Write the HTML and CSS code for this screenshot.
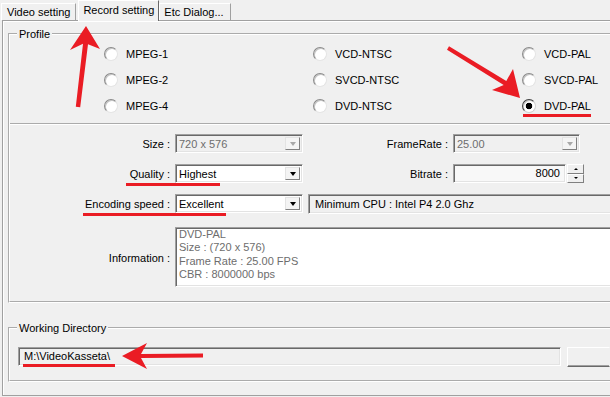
FILE: index.html
```html
<!DOCTYPE html>
<html lang="en">
<head>
    <meta charset="UTF-8">
    <meta name="viewport" content="width=device-width, initial-scale=1.0">
    <title>Record setting</title>
    <link rel="stylesheet" href="styles.css">
</head>
<body>
    <div class="window">
        <div class="tabs">
            <div class="tab">Video setting</div>
            <div class="tab active">Record setting</div>
            <div class="tab last">Etc Dialog...</div>
        </div>
        <div class="page">
            <fieldset class="group">
                <legend>Profile</legend>
                <div class="radios">
                    <label class="radio"><span class="dot"></span>MPEG-1</label>
                    <label class="radio"><span class="dot"></span>VCD-NTSC</label>
                    <label class="radio"><span class="dot"></span>VCD-PAL</label>
                    <label class="radio"><span class="dot"></span>MPEG-2</label>
                    <label class="radio"><span class="dot"></span>SVCD-NTSC</label>
                    <label class="radio"><span class="dot"></span>SVCD-PAL</label>
                    <label class="radio"><span class="dot"></span>MPEG-4</label>
                    <label class="radio"><span class="dot"></span>DVD-NTSC</label>
                    <label class="radio"><span class="dot checked"></span>DVD-PAL</label>
                </div>
                <div class="settings">
                    <span class="lbl first">Size :</span>
                    <div class="combo disabled"><span>720 x 576</span><i class="drop"></i></div>
                    <span class="lbl">FrameRate :</span>
                    <div class="combo disabled"><span>25.00</span><i class="drop"></i></div>

                    <span class="lbl first">Quality :</span>
                    <div class="combo"><span>Highest</span><i class="drop"></i></div>
                    <span class="lbl">Bitrate :</span>
                    <div class="spinner">
                        <div class="field number">8000</div>
                        <div class="spin"><span class="up"></span><span class="down"></span></div>
                    </div>

                    <span class="lbl first">Encoding speed :</span>
                    <div class="combo"><span>Excellent</span><i class="drop"></i></div>
                    <div class="field cpu">Minimum CPU : Intel P4 2.0 Ghz</div>

                    <span class="lbl first info-lbl">Information :</span>
                    <div class="field info">DVD-PAL<br>Size : (720 x 576)<br>Frame Rate : 25.00 FPS<br>CBR : 8000000 bps</div>
                </div>
            </fieldset>

            <fieldset class="group workdir">
                <legend>Working Directory</legend>
                <div class="dir-row">
                    <div class="field dir">M:\VideoKasseta\</div>
                    <div class="browse"></div>
                </div>
            </fieldset>
        </div>
    </div>

    <svg class="marks" width="610" height="397" viewBox="0 0 610 397">
        <g fill="#ea1c24">
            <rect x="83" y="17" width="74" height="3"/>
            <rect x="523" y="114" width="68" height="3"/>
            <rect x="126" y="183" width="94" height="3"/>
            <rect x="83" y="213" width="143" height="3"/>
            <rect x="23" y="364" width="92" height="3"/>
            <polygon points="86,26 100,49 88,44.3 80.2,107.3 75.8,106.7 83,43.7 70,50"/>
            <polygon points="520,98 513,69 506.3,80.9 449,46.3 447,49.7 503.7,85.1 492,90"/>
            <polygon points="122,356 147,343 141,354 203,353.5 203,357.5 141,358 147,369"/>
        </g>
    </svg>
</body>
</html>
```

FILE: styles.css
```css
body {
    margin: 0;
    width: 610px;
    height: 397px;
    overflow: hidden;
    position: relative;
    background-color: #f0f0f0;
    font-family: 'Liberation Sans', Arial, sans-serif;
    font-size: 11px;
    color: #000;
}

.window {
    width: 610px;
}

/* tabs */
.tabs {
    display: flex;
    align-items: flex-end;
    height: 20px;
    padding-left: 1px;
}

.tab {
    height: 16px;
    line-height: 16px;
    padding: 0 5px;
    border: 1px solid #fff;
    border-right-color: #a0a0a0;
    border-bottom: none;
    white-space: nowrap;
}

.tab.active {
    height: 20px;
    line-height: 18px;
    padding: 0 4px;
    margin: 0 0 -1px 2px;
    border-right-color: #696969;
    background-color: #f0f0f0;
    position: relative;
    z-index: 1;
}

.tab.last {
    padding: 0 6px 0 4px;
}

.page {
    margin-left: 2px;
    border: 1px solid #a0a0a0;
    border-right: none;
    box-shadow: inset 1px 1px 0 #fff;
    padding: 0 0 13px 0;
}

/* group boxes */
.group {
    margin: 6px 0 0 5px;
    padding: 0;
    border: 2px groove #fff;
    border-right: none;
    min-width: 0;
}

.group legend {
    margin-left: 7px;
    padding: 0 2px;
    line-height: 14px;
}

.group.workdir {
    margin-top: 18px;
}

/* radio buttons */
.radios {
    display: grid;
    grid-template-columns: 209px 209px 1fr;
    grid-auto-rows: 26px;
    padding: 0 0 4px 94px;
}

.radio {
    display: flex;
    align-items: center;
    gap: 8px;
    white-space: nowrap;
}

.dot {
    width: 14px;
    height: 14px;
    box-sizing: border-box;
    border-radius: 50%;
    border: 1px solid;
    border-color: #8a8a8a #e4e4e4 #e4e4e4 #8a8a8a;
    background-color: #fff;
    box-shadow: inset 1px 1px 0 #c4c4c4;
}

.dot.checked {
    border-color: #404040 #d0d0d0 #d0d0d0 #404040;
    background: radial-gradient(circle, #000 0, #000 3px, #fff 3.6px);
}

/* settings grid */
.settings {
    border-top: 2px groove #fff;
    display: grid;
    grid-template-columns: 165px 128px 150px 127px 1fr;
    grid-template-rows: 19px 19px 19px 63px;
    row-gap: 11px;
    align-items: center;
    padding: 9px 0 14px;
}

.lbl {
    text-align: right;
    padding-right: 5px;
    white-space: nowrap;
}

.lbl.first {
    grid-column: 1;
}

.lbl.info-lbl {
    padding-top: 4px;
}

.combo,
.field {
    box-sizing: border-box;
    height: 19px;
    border: 1px solid;
    border-color: #a0a0a0 #fff #fff #a0a0a0;
    box-shadow: inset 1px 1px 0 #696969, inset -1px -1px 0 #e3e3e3;
    background-color: #fff;
    white-space: nowrap;
}

.combo {
    display: flex;
    align-items: center;
    padding-left: 3px;
}

.combo.disabled {
    background-color: #f0f0f0;
    color: #6d6d6d;
}

.drop {
    margin-left: auto;
    margin-right: 2px;
    width: 15px;
    height: 13px;
    box-sizing: border-box;
    display: flex;
    align-items: center;
    justify-content: center;
    border: 1px solid;
    border-color: #e3e3e3 #808080 #808080 #e3e3e3;
    background-color: #f4f4f4;
}

.drop::before {
    content: "";
    border-left: 3.5px solid transparent;
    border-right: 3.5px solid transparent;
    border-top: 4px solid #000;
}

.combo.disabled .drop::before {
    border-top-color: #a8a8a8;
}

.spinner {
    display: flex;
    gap: 1px;
    width: 131px;
    height: 19px;
}

.field.number {
    width: 113px;
    background-color: #f8f8f8;
    text-align: right;
    padding-right: 5px;
    line-height: 17px;
}

.spin {
    width: 17px;
    display: flex;
    flex-direction: column;
}

.spin span {
    flex: 1;
    display: flex;
    align-items: center;
    justify-content: center;
    border: 1px solid;
    border-color: #fff #808080 #808080 #fff;
    background-color: #f0f0f0;
}

.spin .up::before,
.spin .down::before {
    content: "";
    border-left: 2px solid transparent;
    border-right: 2px solid transparent;
}

.spin .up::before {
    border-bottom: 2px solid #000;
}

.spin .down::before {
    border-top: 2px solid #000;
}

/* boxes that run on past the right edge */
.field.cpu,
.field.info {
    border-right: none;
    box-shadow: inset 1px 1px 0 #696969, inset 0 -1px 0 #e3e3e3;
}

.field.cpu {
    grid-column: 3 / -1;
    margin-left: 5px;
    height: 20px;
    background-color: #f0f0f0;
    padding-left: 6px;
    line-height: 18px;
}

.field.info {
    grid-column: 2 / -1;
    align-self: end;
    height: 60px;
    padding: 0 3px;
    line-height: 13.4px;
    color: #6d6d6d;
}

/* working directory */
.dir-row {
    display: flex;
    gap: 6px;
    padding: 12px 0 13px 8px;
}

.field.dir {
    width: 543px;
    background-color: #f0f0f0;
    padding-left: 5px;
    line-height: 17px;
}

.browse {
    flex: 1;
    height: 20px;
    box-sizing: border-box;
    border: 1px solid;
    border-color: #fff #f0f0f0 #696969 #fff;
    box-shadow: inset 0 -1px 0 #a0a0a0;
}

.marks {
    position: absolute;
    top: 0;
    left: 0;
    pointer-events: none;
}
```
